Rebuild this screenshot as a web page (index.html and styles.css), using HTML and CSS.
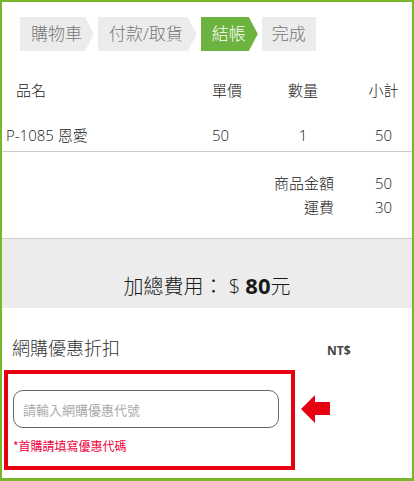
FILE: index.html
```html
<!DOCTYPE html>
<html lang="zh-Hant">
<head>
    <meta charset="UTF-8">
    <meta name="viewport" content="width=device-width, initial-scale=1">
    <title>結帳</title>
    <link rel="stylesheet" href="styles.css">
</head>
<body>
    <div class="frame">
        <nav class="steps">
            <span class="step">購物車</span>
            <span class="step wide">付款/取貨</span>
            <span class="step active">結帳</span>
            <span class="step last">完成</span>
        </nav>

        <div class="cart-head">
            <span class="c-name">品名</span>
            <span class="c-price">單價</span>
            <span class="c-qty">數量</span>
            <span class="c-sub">小計</span>
        </div>
        <div class="cart-row">
            <span class="c-name">P-1085 恩愛</span>
            <span class="c-price">50</span>
            <span class="c-qty">1</span>
            <span class="c-sub">50</span>
        </div>

        <div class="summary">
            <span class="s-label">商品金額</span>
            <span class="c-sub">50</span>
            <span class="s-label">運費</span>
            <span class="c-sub">30</span>
        </div>

        <div class="total">加總費用： $ <b>80</b>元</div>

        <div class="coupon-title">
            <h2>網購優惠折扣</h2>
            <span class="currency">NT$</span>
        </div>
        <div class="coupon-row">
            <div class="coupon-box">
                <input type="text" class="coupon-input" placeholder="請輸入網購優惠代號">
                <p class="coupon-note">*首購請填寫優惠代碼</p>
            </div>
            <svg class="pointer" width="29" height="28" viewBox="0 0 29 28">
                <polygon points="0,14 14,0 14,7 29,7 29,20 14,20 14,28" fill="#e60012"/>
            </svg>
        </div>
    </div>
</body>
</html>
```

FILE: styles.css
```css
* {
    box-sizing: border-box;
}

body {
    margin: 0;
    font-family: 'Open Sans', 'Noto Sans CJK TC', sans-serif;
    font-weight: 300;
    color: #1a1a1a;
    background-color: #fff;
}

.frame {
    width: 414px;
    height: 481px;
    border: 2px solid #76b82a;
    border-bottom-width: 3px;
    overflow: hidden;
}

/* steps */
.steps {
    display: flex;
    gap: 4px;
    margin: 15px 0 0 18px;
}

.step {
    height: 34px;
    line-height: 34px;
    padding: 0 12px 0 11px;
    font-size: 17px;
    color: #777;
    background-color: #ececec;
    clip-path: polygon(0 0, calc(100% - 9px) 0, 100% 50%, calc(100% - 9px) 100%, 0 100%);
}

.step.wide {
    padding-right: 14px;
}

.step.active {
    background-color: #6db33f;
    color: #fff;
}

.step.last {
    padding: 0 10px;
    clip-path: none;
}

/* cart table */
.cart-head,
.cart-row,
.summary {
    display: grid;
    grid-template-columns: 210px 60px 62px 1fr;
    font-size: 15px;
}

.cart-head {
    margin-top: 23px;
    height: 30px;
    align-items: center;
}

.cart-head .c-name {
    padding-left: 14px;
}

.cart-row {
    padding: 20px 0 4px;
    line-height: 23px;
    border-bottom: 1px solid #ccc;
}

.cart-row .c-name {
    padding-left: 4px;
}

.c-qty {
    text-align: center;
}

.c-sub {
    padding-left: 21px;
    text-align: center;
}

.summary {
    padding: 19px 0;
    line-height: 24px;
    border-bottom: 1px solid #ccc;
}

.s-label {
    grid-column: 1 / 4;
    text-align: right;
}

.total {
    height: 69px;
    padding-top: 32px;
    line-height: 28px;
    font-size: 20px;
    text-align: center;
    background-color: #ececec;
}

.total b {
    font-size: 22px;
    font-weight: bold;
}

/* coupon */
.coupon-title {
    display: flex;
    align-items: baseline;
    margin-top: 27px;
    padding-left: 10px;
}

.coupon-title h2 {
    width: 315px;
    margin: 0;
    font-size: 18px;
    font-weight: 300;
    line-height: 26px;
    color: #333;
}

.currency {
    font-size: 12px;
    font-weight: bold;
    color: #444;
}

.coupon-row {
    display: flex;
    align-items: flex-start;
    gap: 6px;
    margin: 9px 0 0 2px;
}

.coupon-box {
    width: 291px;
    height: 100px;
    padding: 16px 12px 0 5px;
    border: 4px solid #e60012;
}

.coupon-input {
    display: block;
    width: 100%;
    height: 38px;
    padding: 0 9px;
    border: 1px solid #666;
    border-radius: 10px;
    font-family: 'Noto Sans CJK TC', sans-serif;
    font-size: 13px;
    outline: none;
}

.coupon-input::placeholder {
    color: #aaa;
}

.coupon-note {
    margin: 10px 0 0;
    font-family: 'Noto Sans CJK TC', sans-serif;
    font-weight: normal;
    font-size: 12px;
    line-height: 16px;
    color: #f0003c;
}

.pointer {
    margin-top: 25px;
}
```
